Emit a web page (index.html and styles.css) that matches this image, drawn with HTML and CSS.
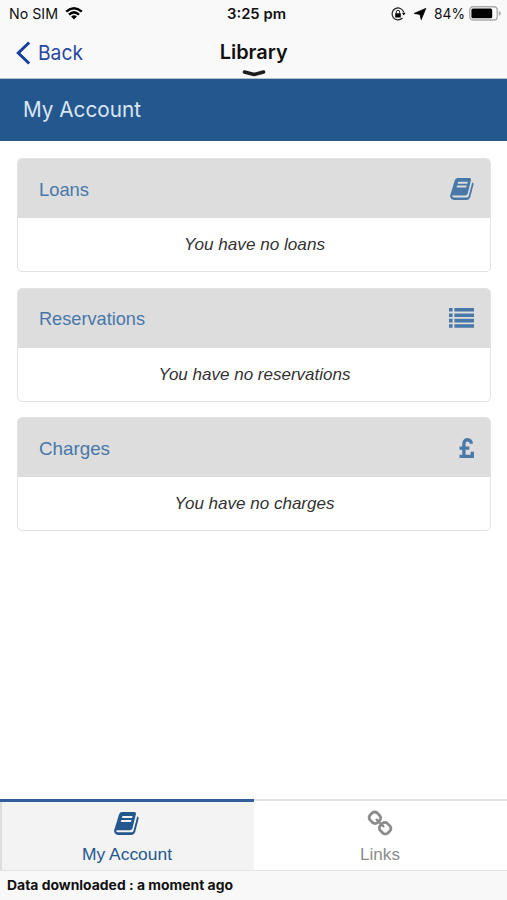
FILE: index.html
```html
<!DOCTYPE html>
<html lang="en">
<head>
<meta charset="utf-8">
<title>Library</title>
<link rel="stylesheet" href="styles.css">
</head>
<body>
<svg class="defs" aria-hidden="true">
  <symbol id="book" viewBox="0 0 25 23">
    <path d="M8.2 0H20.5Q22.4.2 21.9 2.2L18.4 16.5Q17.8 18.2 16 18.2H3Q1.9 18.3 2.2 19.2Q2.6 20.3 4.2 20.3H17.6Q19 20.3 19.5 18.8L23.2 4.6Q25 5.1 24.5 7L21.1 20.2Q20.2 22.9 17.6 22.9H4Q.9 22.7.2 19.8Q-.1 17.9.8 16.2L5 2.4Q5.8 0 8.2 0zM8.5 4 7.9 6.1H18L18.6 4zM7.4 7.9 6.8 10H16.9L17.5 7.9z" fill="currentColor" fill-rule="evenodd"/>
  </symbol>
</svg>
<header class="top">
  <div class="status">
    <div class="carrier">
      <svg class="t-carrier" width="50" height="18"><text x="0" y="14" textLength="49" lengthAdjust="spacingAndGlyphs">No SIM</text></svg>
      <svg class="wifi" width="18" height="13" viewBox="0 0 18 13"><g fill="none" stroke="#000" stroke-width="2.5"><path d="M1.2 4.6Q9-2 16.8 4.6M4 7.6Q9 3.2 14 7.6"/></g><path d="M6.1 9.5Q9 7.2 11.9 9.5L9 12.5z"/></svg>
    </div>
    <div class="time"><svg width="60" height="18"><text x="0" y="14" textLength="59" lengthAdjust="spacingAndGlyphs">3:25 pm</text></svg></div>
    <div class="power">
      <svg width="15" height="14" viewBox="0 0 15 14"><path d="M12.8 5.2A6 6 0 1 0 11.5 11" fill="none" stroke="#222" stroke-width="1.2"/><path d="M10.9 5.8H14.6L12.8 8.6z"/><rect x="4.2" y="6.2" width="5.6" height="4.2" rx=".5"/><path d="M5.3 6.5V5a1.7 1.7 0 0 1 3.4 0v1.5" fill="none" stroke="#222" stroke-width="1"/></svg>
      <svg class="arrow" width="12" height="12" viewBox="0 0 12 12"><path d="M11.8.4 7.2 11.6 6 6.4 .2 5.4z" stroke="#000" stroke-width=".8" stroke-linejoin="round"/></svg>
      <svg class="t-percent" width="31" height="18"><text x="0" y="14" textLength="31" lengthAdjust="spacingAndGlyphs">84%</text></svg>
      <svg class="battery" width="32" height="15" viewBox="0 0 32 15"><rect x=".8" y=".8" width="27.4" height="13.2" rx="3.2" fill="#fff" stroke="#aaa" stroke-width="1.4"/><rect x="2.4" y="2.5" width="20.8" height="9.8" rx="1.5"/><path d="M29.8 5q2 .5 2 2.4t-2 2.4z" fill="#aaa"/></svg>
    </div>
  </div>
  <div class="nav">
    <div class="back">
      <svg width="15" height="24" viewBox="0 0 15 24"><path d="M13.2 1.5 2.3 12l10.9 10.5" fill="none" stroke="#17409c" stroke-width="3"/></svg>
      <svg class="t-back" width="48" height="28"><text x="0" y="21" textLength="45" lengthAdjust="spacingAndGlyphs">Back</text></svg>
    </div>
    <div class="title">
      <svg class="t-title" width="70" height="28"><text x="0.7" y="21" textLength="68" lengthAdjust="spacingAndGlyphs">Library</text></svg>
      <svg class="handle" width="24" height="7" viewBox="0 0 24 7"><path d="M2.5 2 12 4.5 21.5 2" fill="none" stroke="#1c1c1c" stroke-width="3.6" stroke-linecap="round" stroke-linejoin="round"/></svg>
    </div>
  </div>
</header>
<h1 class="banner"><svg width="120" height="32"><text x="0" y="23" textLength="118" lengthAdjust="spacingAndGlyphs">My Account</text></svg></h1>
<main class="content">
  <section class="panel">
    <h2 class="panel-head"><svg width="60" height="26"><text x="0" y="19.5" textLength="50" lengthAdjust="spacingAndGlyphs">Loans</text></svg>
      <svg class="icon" width="24" height="22"><use href="#book"/></svg></h2>
    <p class="panel-body"><svg width="141" height="24"><text x="0" y="18" textLength="141" lengthAdjust="spacingAndGlyphs">You have no loans</text></svg></p>
  </section>
  <section class="panel">
    <h2 class="panel-head"><svg width="110" height="26"><text x="0" y="19.5" textLength="106" lengthAdjust="spacingAndGlyphs">Reservations</text></svg>
      <svg class="icon list" width="25" height="20" viewBox="0 0 25 20" fill="currentColor"><path d="M0 0h3.6v3.6H0zM5.4 0H25v3.6H5.4zM0 5.4h3.6V9H0zM5.4 5.4H25V9H5.4zM0 10.8h3.6v3.6H0zM5.4 10.8H25v3.6H5.4zM0 16.2h3.6v3.6H0zM5.4 16.2H25v3.6H5.4z"/></svg></h2>
    <p class="panel-body"><svg width="193" height="24"><text x="0.5" y="18" textLength="192" lengthAdjust="spacingAndGlyphs">You have no reservations</text></svg></p>
  </section>
  <section class="panel">
    <h2 class="panel-head"><svg width="80" height="26"><text x="0" y="19.5" textLength="71" lengthAdjust="spacingAndGlyphs">Charges</text></svg>
      <svg class="icon" width="15" height="20" viewBox="0 0 15 20"><path d="M12.3 5.8C12.3.5 4.9.3 4.9 5.8V18M.5 10.2H10.3M.5 18.3H13.3V13.7" fill="none" stroke="currentColor" stroke-width="3.3"/></svg></h2>
    <p class="panel-body"><svg width="160" height="24"><text x="0.5" y="18" textLength="160" lengthAdjust="spacingAndGlyphs">You have no charges</text></svg></p>
  </section>
</main>
<nav class="tabs">
  <div class="tab active">
    <svg class="tab-book" width="25" height="23"><use href="#book"/></svg>
    <svg class="label" width="90" height="24"><text x="0" y="17" textLength="90" lengthAdjust="spacingAndGlyphs">My Account</text></svg>
  </div>
  <div class="tab">
    <svg width="24" height="24" viewBox="0 0 24 24" fill="none" stroke="currentColor" stroke-width="2.8"><rect x="1.6" y="1.8" width="10.6" height="10" rx="3.6" transform="rotate(45 6.9 6.8)"/><rect x="11.8" y="12.2" width="10.6" height="10" rx="3.6" transform="rotate(45 17.1 17.2)"/><path d="m8 8 8 8" stroke-width="2.4"/></svg>
    <svg class="label" width="40" height="24"><text x="0" y="17" textLength="40" lengthAdjust="spacingAndGlyphs">Links</text></svg>
  </div>
</nav>
<footer class="foot"><svg width="230" height="22"><text x="0" y="15" textLength="226" lengthAdjust="spacingAndGlyphs">Data downloaded : a moment ago</text></svg></footer>
</body>
</html>
```
FILE: styles.css
```css
* { box-sizing: border-box; }
body {
  margin: 0;
  height: 900px;
  display: flex;
  flex-direction: column;
  overflow: hidden;
  background: #fff;
  font-family: "Liberation Sans", Arial, sans-serif;
}
svg { display: block; flex: none; overflow: visible; }
text { fill: currentColor; }
.defs { width: 0; height: 0; position: absolute; }
h1, h2, p { margin: 0; font-weight: 400; }

.top { height: 79px; background: #f9f9f9; color: #111; border-bottom: 1px solid #b5bfca; }
.status {
  height: 28px;
  display: grid;
  grid-template-columns: 1fr 60px 1fr;
  align-items: center;
  font: 14.5px Inter, sans-serif;
}
.carrier { display: flex; align-items: center; gap: 6px; padding-left: 8.5px; }
.wifi { margin-top: -2px; }
.time { font-weight: 600; padding-left: 3px; }
.power { display: flex; align-items: center; justify-content: flex-end; padding-right: 6px; }
.arrow { margin: 0 8px 0 8px; }
.battery { margin-left: 4px; margin-top: -2px; }
.nav { height: 50px; display: grid; grid-template-columns: 1fr 70px 1fr; }
.back { display: flex; align-items: center; gap: 7px; height: 49px; padding-left: 16px; color: #2948a0; font: 20.5px Inter, sans-serif; }
.title { padding-top: 10px; font: 600 20px Inter, sans-serif; }
.handle { margin: 4px 0 0 23px; }

.banner {
  height: 62px;
  padding: 15px 23px;
  background: #24578e;
  color: #d9e6f2;
  font: 400 21.5px Inter, sans-serif;
}

.content { flex: 1; display: flex; flex-direction: column; gap: 15.7px; padding: 17.3px 16px 0 17px; }
.panel { height: 113.8px; border: 1.5px solid #e2e2e2; border-radius: 5px; overflow: hidden; }
.panel-head {
  height: 59px;
  display: flex;
  align-items: center;
  justify-content: space-between;
  padding: 0 16px 0 21px;
  background: #ddd;
  color: #4878a8;
  font-size: 18.5px;
}
.panel-head .list { margin-top: -1px; }
.panel-body {
  height: 52px;
  display: flex;
  align-items: center;
  justify-content: center;
  color: #333;
  font-size: 17px;
  font-style: italic;
}

.tabs { height: 72px; display: grid; grid-template-columns: 1fr 1fr; border-bottom: 1px solid #e2e2e2; }
.tab {
  display: flex;
  flex-direction: column;
  align-items: center;
  padding-top: 10px;
  gap: 8px;
  border-top: 2px solid #e2e2e2;
  color: #8c8c8c;
  font-size: 17px;
}
.tab.active { border-top: 3px solid #30609a; box-shadow: inset 2px 0 #ddd; background: #f3f3f3; color: #24578e; padding-top: 10px; }
.foot { height: 29px; padding: 4px 7px; background: #f8f8f8; color: #111; font: 700 13px Inter, sans-serif; }
```
